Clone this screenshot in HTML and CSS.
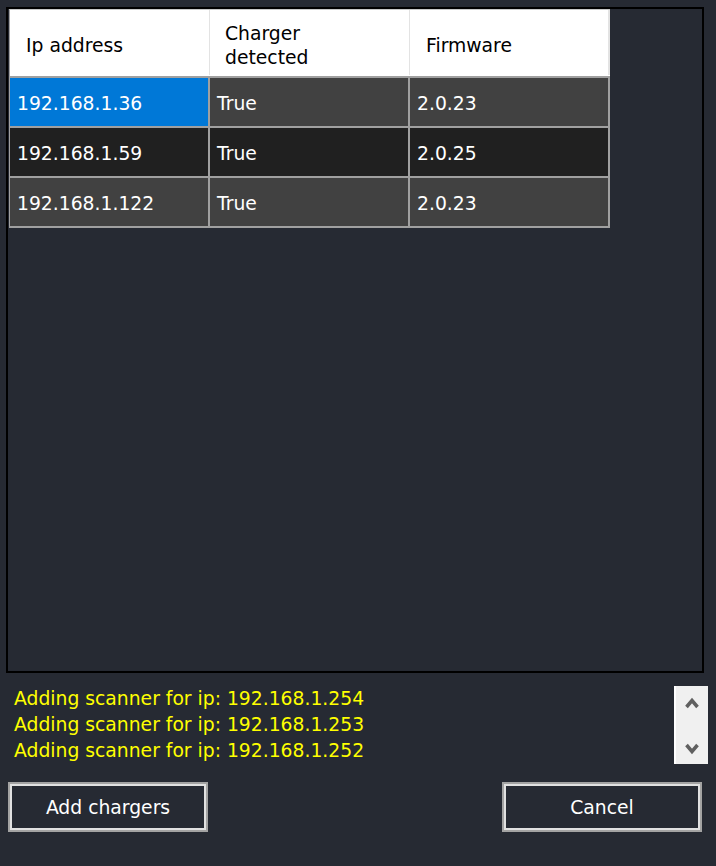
FILE: index.html
```html
<!DOCTYPE html>
<html>
<head>
<meta charset="utf-8">
<link rel="stylesheet" href="styles.css">
</head>
<body>
<div class="panel">
  <div class="table">
    <div class="thead">
      <div class="th">Ip address</div>
      <div class="th">Charger<br>detected</div>
      <div class="th">Firmware</div>
    </div>
    <div class="row row-light">
      <div class="td selected">192.168.1.36</div>
      <div class="td">True</div>
      <div class="td">2.0.23</div>
    </div>
    <div class="row row-dark">
      <div class="td">192.168.1.59</div>
      <div class="td">True</div>
      <div class="td">2.0.25</div>
    </div>
    <div class="row row-light">
      <div class="td">192.168.1.122</div>
      <div class="td">True</div>
      <div class="td">2.0.23</div>
    </div>
  </div>
</div>
<div class="log">
  <div class="log-text">
    <div>Adding scanner for ip: 192.168.1.254</div>
    <div>Adding scanner for ip: 192.168.1.253</div>
    <div>Adding scanner for ip: 192.168.1.252</div>
  </div>
  <div class="scrollbar">
    <svg width="14" height="12" viewBox="0 0 14 12"><path d="M1.5 10 L7 3.5 L12.5 10" fill="none" stroke="#606060" stroke-width="3.5"/></svg>
    <svg width="14" height="12" viewBox="0 0 14 12"><path d="M1.5 2 L7 8.5 L12.5 2" fill="none" stroke="#606060" stroke-width="3.5"/></svg>
  </div>
</div>
<div class="buttons">
  <button class="btn">Add chargers</button>
  <button class="btn">Cancel</button>
</div>
</body>
</html>
```
FILE: styles.css
```css
* { box-sizing: border-box; }
html, body {
  margin: 0;
  padding: 0;
  background: #262a33;
  width: 716px;
  height: 866px;
  overflow: hidden;
  font-family: "DejaVu Sans", sans-serif;
  font-size: 18.75px;
}
.panel {
  margin: 7px 0 0 6px;
  width: 698px;
  height: 666px;
  border: 2px solid #000;
}
.table {
  width: 601px;
  margin: 0 0 0 1px;
  border-left: 1px solid #a0a0a0;
  border-top: 1px solid #c8c8c8;
}
.thead {
  display: grid;
  grid-template-columns: 200px 200px 200px;
  height: 66px;
  background: #fff;
  border-bottom: 1px solid #fff;
}
.th {
  display: flex;
  align-items: center;
  padding: 7px 0 0 16px;
  color: #000;
  border-right: 1px solid #e3e3e3;
  line-height: 24px;
}
.th:nth-child(2) { padding-left: 15px; }
.th:last-child { border-right: 2px solid #e3e3e3; }
.row {
  display: grid;
  grid-template-columns: 200px 200px 200px;
  height: 50px;
  border-top: 2px solid #a0a0a0;
}
.row:last-child { height: 52px; border-bottom: 2px solid #a0a0a0; }
.row-light { background: #414141; }
.row-dark { background: #202020; }
.td {
  display: flex;
  align-items: center;
  padding: 3px 0 0 7px;
  color: #fff;
  border-right: 2px solid #a0a0a0;
}
.selected { background: #0078d7; }
.log {
  display: flex;
  justify-content: space-between;
  margin: 13px 0 0 8px;
  width: 700px;
  height: 78px;
}
.log-text {
  padding: 0 0 0 6px;
  color: #ffff00;
  line-height: 26px;
  margin-top: 0;
}
.scrollbar {
  width: 34px;
  height: 78px;
  background: #f0f0f0;
  border-left: 2px solid #fff;
  display: flex;
  flex-direction: column;
  align-items: center;
  justify-content: space-between;
  padding: 11px 0 9px 0;
}
.buttons {
  display: flex;
  justify-content: space-between;
  margin: 18px 0 0 8px;
  width: 694px;
}
.btn {
  width: 200px;
  height: 50px;
  background: #262a33;
  color: #fff;
  font-family: "DejaVu Sans", sans-serif;
  font-size: 18.75px;
  border: 4px solid #e1e1e1;
  outline: 2px solid #a3a3a3;
  outline-offset: -2px;
  padding: 0;
  margin: 0;
}
```
